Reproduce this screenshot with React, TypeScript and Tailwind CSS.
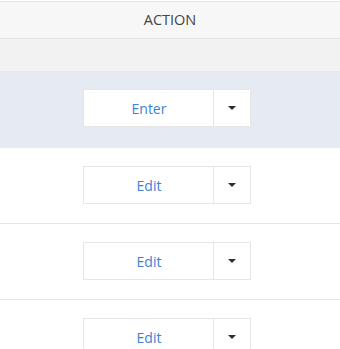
const rows = [
  { label: 'Enter', active: true },
  { label: 'Edit', active: false },
  { label: 'Edit', active: false },
  { label: 'Edit', active: false },
];

function SplitButton({ label }: { label: string }) {
  return (
    <div className="ml-[83px] flex h-[38px] w-[168px] border border-[#e6e6e6] bg-white">
      <button className="flex flex-1 items-center justify-center border-r border-[#e6e6e6] pl-px text-[14px] text-[#3a83d4]">
        {label}
      </button>
      <button className="flex w-[36px] items-center justify-center">
        <svg width="8" height="4" viewBox="0 0 8 4">
          <path d="M0 0h8L4 4z" fill="#2d2d2d" />
        </svg>
      </button>
    </div>
  );
}

export default function App() {
  return (
    <div className="min-h-screen bg-white pt-px" style={{ fontFamily: '"Open Sans", "Liberation Sans", sans-serif' }}>
      <div className="flex h-[38px] items-center justify-center border-y border-[#e3e3e3] bg-[#f7f7f7] text-[14.5px] text-[#454545]">
        ACTION
      </div>
      <div className="h-[32px] bg-[#f2f2f2]" />
      {rows.map((r, i) => (
        <div
          key={i}
          className={r.active ? 'bg-[#e6ebf3] pt-[18px] pb-[21px]' : 'border-b border-[#e6e6e6] pt-[18px] pb-[19px]'}
        >
          <SplitButton label={r.label} />
        </div>
      ))}
    </div>
  );
}
